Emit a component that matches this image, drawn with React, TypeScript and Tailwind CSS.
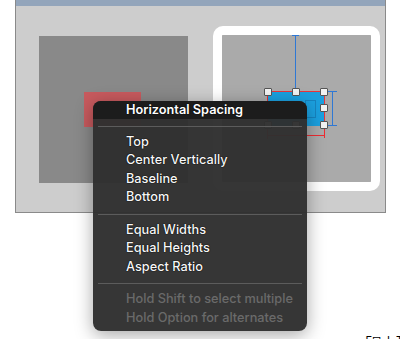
import React from "react";

function Handle({ x, y }: { x: number; y: number }) {
  return (
    <div
      className="absolute w-[8px] h-[8px] bg-[#f2f2f2] border border-[#555] rounded-[1px]"
      style={{ left: x - 4, top: y - 4 }}
    />
  );
}

function Item({ label, disabled }: { label: string; disabled?: boolean }) {
  return (
    <div
      className={
        "h-[18.5px] flex items-center pl-[33px] text-[12.75px] font-medium leading-none " +
        (disabled
          ? "text-[#6a6a6a]"
          : "text-[#f7f7f7] [text-shadow:0_0_1px_#000,0_0_1px_#000]")
      }
    >
      {label}
    </div>
  );
}

function Sep() {
  return (
    <div className="h-[14px] flex items-center px-[5px]">
      <div className="h-px w-full bg-[#5c5c5c]" />
    </div>
  );
}

export default function App() {
  return (
    <div
      className="relative w-[400px] h-[339px] bg-white overflow-hidden flex flex-col"
      style={{ fontFamily: "Inter, 'Liberation Sans', Arial, sans-serif" }}
    >
      {/* window */}
      <div className="ml-[15px] w-[371px] h-[213px] border-x border-b border-[#8a8a8a] flex flex-col">
        <div className="h-[6px] bg-[#93a5bb]" />
        <div className="flex-1 bg-[#cdcdcd] flex items-start">
          {/* left box */}
          <div className="relative ml-[23px] mt-[30px] w-[149px] h-[147px] bg-[#898989]">
            <div className="absolute left-[45px] top-[56px] w-[57px] h-[35px] bg-[#c75a5e]" />
          </div>
          {/* right box */}
          <div className="ml-[25px] mt-[20px] border-[9px] border-white rounded-[10px] overflow-hidden">
            <div className="relative w-[149px] h-[147px] bg-[#aaaaaa]">
              {/* top vertical blue line with tick */}
              <div className="absolute left-[70px] top-0 w-[7px] h-[56px] flex flex-col items-center">
                <div className="w-full h-px bg-[#2f78d4]" />
                <div className="w-px flex-1 bg-[#2f78d4]" />
              </div>
              {/* red guides */}
              <div className="absolute left-[45px] top-[56px] w-px h-[48px] bg-[#ee2b31]" />
              <div className="absolute left-[102px] top-[56px] w-px h-[47px] bg-[#ee2b31]" />
              <div className="absolute left-[45px] top-[100px] w-[58px] h-px bg-[#ee2b31]" />
              {/* blue selected box */}
              <div className="absolute left-[46px] top-[56px] w-[57px] h-[35px] bg-[#1ba0df] border-t border-r border-[#e8343b]">
                <div className="absolute left-[37px] top-[8px] w-[11px] h-[18px] border border-[#1684c0]" />
              </div>
              {/* blue bracket */}
              <div className="absolute left-[106px] top-[56px] w-[9px] h-[35px] flex flex-col items-center">
                <div className="w-full h-px bg-[#2f78d4]" />
                <div className="w-px flex-1 bg-[#2f78d4]" />
                <div className="w-full h-px bg-[#2f78d4]" />
              </div>
              <Handle x={46} y={57} />
              <Handle x={74} y={57} />
              <Handle x={102} y={57} />
              <Handle x={102} y={73} />
              <Handle x={102} y={90} />
              <Handle x={46} y={73} />
              <Handle x={46} y={90} />
              <Handle x={74} y={90} />
            </div>
          </div>
        </div>
      </div>

      <div className="mt-auto h-[3px] overflow-hidden flex justify-end pr-0 gap-[6px] text-[11px] leading-[9px] text-black">
        <span>E⊟</span>
        <span>I</span>
        <span className="w-[4px] overflow-hidden">T</span>
      </div>

      {/* context menu */}
      <div className="absolute left-[93px] top-[101px] w-[214px] h-[230px] rounded-[8px] bg-[#303030]/[0.97] shadow-[0_4px_18px_rgba(0,0,0,0.35)] overflow-hidden pb-[4px]">
        <div className="h-[18px] bg-[#1c1c1c] flex items-center pl-[33px] text-[12.75px] font-semibold leading-none text-white [text-shadow:0_0_1px_#000,0_0_1px_#000]">
          Horizontal Spacing
        </div>
        <Sep />
        <Item label="Top" />
        <Item label="Center Vertically" />
        <Item label="Baseline" />
        <Item label="Bottom" />
        <Sep />
        <Item label="Equal Widths" />
        <Item label="Equal Heights" />
        <Item label="Aspect Ratio" />
        <Sep />
        <Item label="Hold Shift to select multiple" disabled />
        <Item label="Hold Option for alternates" disabled />
      </div>
    </div>
  );
}
